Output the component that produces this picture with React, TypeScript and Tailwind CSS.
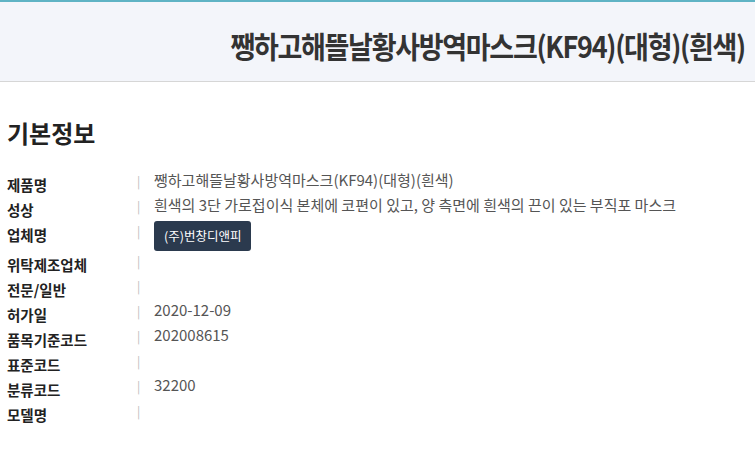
const rows: { label: string; value?: string; button?: string }[] = [
  { label: "제품명", value: "쨍하고해뜰날황사방역마스크(KF94)(대형)(흰색)" },
  { label: "성상", value: "흰색의 3단 가로접이식 본체에 코편이 있고, 양 측면에 흰색의 끈이 있는 부직포 마스크" },
  { label: "업체명", button: "(주)번창디앤피" },
  { label: "위탁제조업체" },
  { label: "전문/일반" },
  { label: "허가일", value: "2020-12-09" },
  { label: "품목기준코드", value: "202008615" },
  { label: "표준코드" },
  { label: "분류코드", value: "32200" },
  { label: "모델명" },
];

export default function App() {
  return (
    <div
      className="w-[755px] h-[468px] bg-white overflow-hidden"
      style={{ fontFamily: '"Noto Sans CJK KR", "Noto Sans", sans-serif' }}
    >
      <header className="h-[82px] bg-[#f3f5fa] border-t-2 border-[#5fb3c4] border-b border-b-[#d6d6d6] flex items-center justify-end pr-[10px]">
        <h1 className="text-[27px] font-bold text-[#333] tracking-[-1.3px] mt-[10px] scale-y-[1.1]">
          쨍하고해뜰날황사방역마스크(KF94)(대형)(흰색)
        </h1>
      </header>

      <section className="h-[385px] border-b border-[#d9d9d9] px-[7px]">
        <h2 className="text-[24px] font-bold text-[#222] mt-[34px] mb-[21px] leading-[34px]">
          기본정보
        </h2>
        <dl className="flex flex-col">
          {rows.map((r) => (
            <div
              key={r.label}
              className={`flex items-start ${r.button ? "h-[30px]" : "h-[25px]"}`}
            >
              <dt className="w-[130px] text-[14.5px] font-bold text-[#222] leading-[25px] mt-[1px]">
                {r.label}
              </dt>
              <span className="text-[#bbb] text-[12px] leading-[20px] w-[17px]">|</span>
              {r.button ? (
                <button className="bg-[#2b3a4e] text-white text-[12.5px] rounded-[3px] h-[30px] px-[10px]">
                  {r.button}
                </button>
              ) : (
                <dd className="text-[15px] text-[#555] leading-[20px] -mt-[1px]">{r.value}</dd>
              )}
            </div>
          ))}
        </dl>
      </section>
    </div>
  );
}
